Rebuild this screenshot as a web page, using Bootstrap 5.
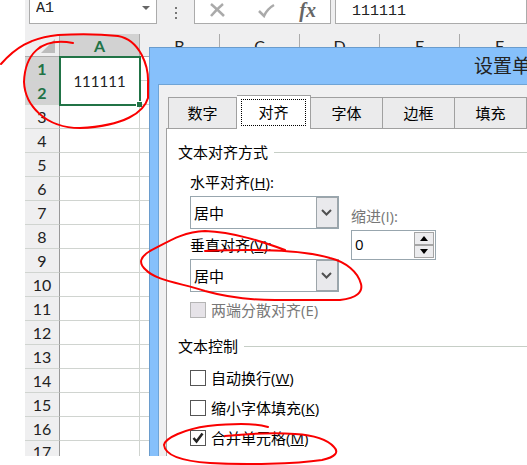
<!DOCTYPE html>
<html lang="zh-CN">
<head>
<meta charset="utf-8">
<meta name="viewport" content="width=device-width, initial-scale=1">
<title>设置单元格格式</title>
<link href="https://cdn.jsdelivr.net/npm/bootstrap@5.3.0/dist/css/bootstrap.min.css" rel="stylesheet">
<style>
body{font:15px/20px "Open Sans","Noto Sans CJK SC",sans-serif;color:#000;background:#fff}
.stage{padding:0 0 9px 25px;overflow:hidden}
.workbook{background:#efeff0}
.formula-bar{height:34px}
.bar-box{height:24px;background:#fff;border:1px solid #ababab;border-top:0}
.bar-box input{font:15px/20px "Liberation Mono",monospace;color:#222;border:0;background:none;min-width:0;padding:0;outline:0}
.name-box{flex:none;width:128px;padding:0 6px}
.tool-box{flex:none;width:137px;padding:0 14px 3px}
.value-box{padding-left:16px}
.bar-dots{flex:none;width:37px}
.plain-btn{border:0;background:none;padding:0;line-height:0}
.fx-btn{font:italic bold 20px/20px "Liberation Serif",serif;color:#666}
.cells{table-layout:fixed;width:100%;border-collapse:separate;border-spacing:0;font:15px/20px Lato,sans-serif;color:#222}
.cells th,.cells td{height:24px;padding:0;text-align:center;border-right:1px solid #d0d4d0;border-bottom:1px solid #d0d4d0;line-height:20px}
.cells td{background:#fff}
.cells th{font-weight:400;background:#efeff0;font-size:16px}
.cells thead th{height:23px;border-color:#ababab;padding-top:2px}
.cells tbody th{border-right-color:#999}
.cells th.picked{background:#d2d2d2;color:#217346;font-weight:700}
.cells .row-no{width:35px}
.cells .col-a{width:80px}
.cells td.current{position:relative;outline:2px solid #217346;outline-offset:-1px;font-size:15px}
.current::after{content:"";position:absolute;right:-3px;bottom:-3px;width:6px;height:6px;background:#217346;border:1px solid #fff;border-width:1px 0 0 1px}
.cells tr.cut th,.cells tr.cut td{height:15px;line-height:14px;border-bottom:0}
.cut span{display:block;height:15px;overflow:hidden;line-height:22px}
.format-window{position:absolute;left:124px;top:47px;right:0;bottom:0;background:#86c0fb;border:1px solid #6a9ccd;border-width:1px 0 0 1px;padding-left:8px;overflow:hidden}
.window-title{font-size:19px;line-height:36px;height:36px;text-align:right;white-space:nowrap;color:#222;margin-right:-4px}
.window-body{background:#f0f0f1;border-left:1px solid #6fa4d6;border-top:1px solid #6fa4d6;padding:10px 0 0 7px;height:100%}
.tab-strip{padding-left:2px;margin-bottom:-1px;position:relative;height:34px}
.tab-strip button{width:72px;height:32px;flex:none;border:1px solid #a0a0a0;border-left-width:0;background:#ebebec;padding:0;color:#000}
.tab-strip button:first-child{width:69px;border-left-width:1px}
.tab-strip button.active{width:74px;height:34px;background:#fff;border-bottom:0;padding:3px 4px 4px}
.active span{display:block;border:1px dotted #000;line-height:25px}
.tab-page{background:#fff;border:1px solid #a0a0a0;border-right:0;padding:13px 0 0 11px;height:100%}
.group-title{gap:6px}
.group-title hr{margin:0;opacity:1;border-top:1px solid #c6cec6}
.group-body{padding-left:12px}
.field-name{display:block;padding-top:6px}
.field-name:first-child{padding-top:10px}
.ticks{row-gap:10px}
.pick{width:149px;height:33px;margin-top:4px;border:1px solid #98a6ae;border-radius:0;padding:0 24px 0 3px;font-size:15px;line-height:20px;color:#000;background:#fff url("data:image/svg+xml,%3Csvg xmlns='http://www.w3.org/2000/svg' width='22' height='31'%3E%3Crect x='.5' y='.5' width='21' height='30' fill='%23e9e9ec' stroke='%239da5aa'/%3E%3Cpath d='M6 13l4.500 4.500L15 13' fill='none' stroke='%23505050' stroke-width='2'/%3E%3C/svg%3E") no-repeat right 0 top 0/22px 31px}
.indent-col{padding-top:44px}
.faint{color:#777}
.spin{width:85px;height:30px;margin-top:4px;border:1px solid #98a6ae;padding:1px 1px 1px 3px}
.spin input{border:0;outline:0;flex:1;min-width:0;padding:0 0 2px}
.spin button{width:20px;height:13px;background:#ececee;border:1px solid #a5a5a5;padding:0;line-height:0}
.tick-row{gap:5px;height:20px}
.tick{appearance:none;width:16px;height:16px;margin:0;border:1px solid #555;background:#fff;flex:none}
.tick:disabled{background:#e6e3e8;border-color:#b5b5b5}
.tick:checked{background:#fff url("data:image/svg+xml,%3Csvg xmlns='http://www.w3.org/2000/svg' viewBox='0 0 14 14'%3E%3Cpath d='M2.500 7l3 3.500 6-8' fill='none' stroke='%23222' stroke-width='2.500'/%3E%3C/svg%3E") center/14px 14px no-repeat}
.pen{position:absolute;left:0;top:0;overflow:visible;pointer-events:none}
</style>
<script src="https://cdn.jsdelivr.net/npm/bootstrap@5.3.0/dist/js/bootstrap.bundle.min.js"></script>
</head>
<body>
<main class="stage position-relative">
<div class="workbook position-relative">
  <div class="formula-bar d-flex align-items-start">
    <div class="bar-box name-box d-flex align-items-start justify-content-between ms-1">
      <input class="w-50 lh-1" value="A1" aria-label="名称框">
      <button class="plain-btn mt-1" aria-label="名称列表"><svg width="8" height="8"><path d="M0 2h8L4 6z" fill="#666"/></svg></button>
    </div>
    <div class="bar-dots text-center"><svg width="4" height="16"><path d="M1 3h2v2H1zM1 8h2v2H1zM1 13h2v2H1z" fill="#777"/></svg></div>
    <div class="bar-box tool-box d-flex align-items-center justify-content-between">
      <button class="plain-btn" aria-label="取消"><svg width="16" height="16"><path d="M2 2Q9 8 15 14M14 2Q8 7 2 14" fill="none" stroke="#aaa" stroke-width="2.500"/></svg></button>
      <button class="plain-btn ms-2" aria-label="输入"><svg width="17" height="16"><path d="M1 9l5 5Q9 7 16 3" fill="none" stroke="#aaa" stroke-width="2.500"/></svg></button>
      <button class="plain-btn fx-btn" aria-label="插入函数">fx</button>
    </div>
    <div class="bar-box value-box flex-fill d-flex ms-1"><input class="w-100" value="111111" aria-label="编辑栏"></div>
  </div>
  <table class="cells">
    <thead><tr>
      <th class="row-no"><svg class="d-block ms-auto me-1" width="14" height="14"><path d="M14 0v14H0z" fill="#bcbcbc"/></svg></th>
      <th class="col-a picked">A</th><th class="col-a">B</th><th class="col-a">C</th><th class="col-a">D</th><th class="col-a">E</th><th class="col-a">F</th><th></th>
    </tr></thead>
    <tbody>
      <tr><th class="picked">1</th><td class="current" rowspan="2">111111</td><td></td><td></td><td></td><td></td><td></td><td></td></tr>
      <tr><th class="picked">2</th><td></td><td></td><td></td><td></td><td></td><td></td></tr>
      <tr><th>3</th><td></td><td></td><td></td><td></td><td></td><td></td><td></td></tr>
      <tr><th>4</th><td></td><td></td><td></td><td></td><td></td><td></td><td></td></tr>
      <tr><th>5</th><td></td><td></td><td></td><td></td><td></td><td></td><td></td></tr>
      <tr><th>6</th><td></td><td></td><td></td><td></td><td></td><td></td><td></td></tr>
      <tr><th>7</th><td></td><td></td><td></td><td></td><td></td><td></td><td></td></tr>
      <tr><th>8</th><td></td><td></td><td></td><td></td><td></td><td></td><td></td></tr>
      <tr><th>9</th><td></td><td></td><td></td><td></td><td></td><td></td><td></td></tr>
      <tr><th>10</th><td></td><td></td><td></td><td></td><td></td><td></td><td></td></tr>
      <tr><th>11</th><td></td><td></td><td></td><td></td><td></td><td></td><td></td></tr>
      <tr><th>12</th><td></td><td></td><td></td><td></td><td></td><td></td><td></td></tr>
      <tr><th>13</th><td></td><td></td><td></td><td></td><td></td><td></td><td></td></tr>
      <tr><th>14</th><td></td><td></td><td></td><td></td><td></td><td></td><td></td></tr>
      <tr><th>15</th><td></td><td></td><td></td><td></td><td></td><td></td><td></td></tr>
      <tr><th>16</th><td></td><td></td><td></td><td></td><td></td><td></td><td></td></tr>
      <tr class="cut"><th><span>17</span></th><td></td><td></td><td></td><td></td><td></td><td></td><td></td></tr>
    </tbody>
  </table>

  <section class="format-window" role="dialog" aria-labelledby="windowTitle">
    <div class="window-title" id="windowTitle">设置单</div>
    <div class="window-body">
      <div class="tab-strip d-flex align-items-end" role="tablist">
        <button role="tab">数字</button><button role="tab" class="active align-self-start"><span>对齐</span></button><button role="tab">字体</button><button role="tab">边框</button><button role="tab">填充</button>
      </div>
      <div class="tab-page">
        <div class="group-title d-flex align-items-center">文本对齐方式<hr class="flex-fill"></div>
        <div class="group-body d-flex">
          <div>
            <label class="field-name" for="horz">水平对齐(<u>H</u>):</label>
            <select class="form-select pick" id="horz"><option>居中</option></select>
            <label class="field-name" for="vert">垂直对齐(<u>V</u>):</label>
            <select class="form-select pick" id="vert"><option>居中</option></select>
          </div>
          <div class="indent-col ms-2 ps-1">
            <label class="d-block faint" for="indent">缩进(I):</label>
            <div class="spin d-flex">
              <input id="indent" value="0">
              <div class="d-flex flex-column">
                <button aria-label="增加"><svg width="8" height="5"><path d="M0 5h8L4 0z"/></svg></button>
                <button aria-label="减少"><svg width="8" height="5"><path d="M0 0h8L4 5z"/></svg></button>
              </div>
            </div>
          </div>
        </div>
        <div class="group-body pt-2">
          <div class="tick-row d-flex align-items-center faint"><input class="tick" type="checkbox" id="justify" disabled><label for="justify">两端分散对齐(E)</label></div>
        </div>
        <div class="group-title d-flex align-items-center mt-3">文本控制<hr class="flex-fill"></div>
        <div class="group-body ticks d-grid pt-2 mt-1">
          <div class="tick-row d-flex align-items-center"><input class="tick" type="checkbox" id="wrap"><label for="wrap">自动换行(<u>W</u>)</label></div>
          <div class="tick-row d-flex align-items-center"><input class="tick" type="checkbox" id="shrink"><label for="shrink">缩小字体填充(<u>K</u>)</label></div>
          <div class="tick-row d-flex align-items-center"><input class="tick" type="checkbox" id="merge" checked><label for="merge">合并单元格(<u>M</u>)</label></div>
        </div>
      </div>
    </div>
  </section>
</div>
<svg class="pen" width="400" height="465" fill="none" stroke="#fa0000" stroke-width="2" stroke-linecap="round" aria-hidden="true">
  <path d="M1 64C15 48 30 38 58 35C75 34 100 34 118 36C140 40 149 66 148 84V98C144 112 125 126 80 128C45 128 25 105 24 82C25 55 40 37 73 43"/>
  <path d="M285 250C263 242 234 232 205 231C180 232 165 244 150 251C140 257 138 263 146 270C155 280 180 283 205 291C230 298 250 300 275 300H340C357 298 363 292 361 284C358 272 346 262 330 258C300 249 250 249 205 251"/>
  <path d="M268 427C255 423 228 424 208 426C185 429 165 438 164 445C165 455 180 461 210 463C245 465 295 464 322 460C336 457 339 452 334 447C326 438 312 435 295 434C270 432 245 434 225 436"/>
</svg>
</main>
</body>
</html>
